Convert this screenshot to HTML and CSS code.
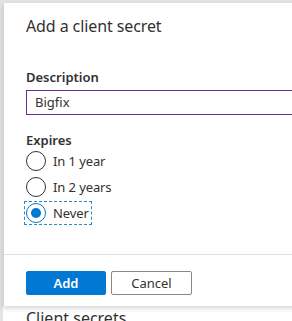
FILE: index.html
```html
<!DOCTYPE html>
<html>
<head>
<meta charset="utf-8">
<link rel="stylesheet" href="styles.css">
</head>
<body>
<div class="page">
  <div class="topstrip"></div>
  <h2 class="section">Client secrets</h2>
</div>
<div class="dialog">
  <div class="body">
    <h1 class="title">Add a client secret</h1>
    <label class="label">Description</label>
    <div class="input">Bigfix</div>
    <div class="label expires">Expires</div>
    <div class="radios">
      <div class="radio"><span class="circle"></span><span>In 1 year</span></div>
      <div class="radio"><span class="circle"></span><span>In 2 years</span></div>
      <div class="radio checked focus"><span class="circle"><span class="dot"></span></span><span>Never</span></div>
    </div>
  </div>
  <div class="footer">
    <button class="btn primary">Add</button>
    <button class="btn">Cancel</button>
  </div>
</div>
</body>
</html>
```
FILE: styles.css
```css
* { box-sizing: border-box; }
html, body { margin: 0; padding: 0; }
body {
  width: 292px; height: 321px; overflow: hidden;
  background: #fff;
  font-family: "Segoe UI", "Noto Sans", "Open Sans", sans-serif;
  color: #323130;
  position: relative;
}
.page { height: 321px; border-left: 3px solid #e4e4e4; }
.topstrip { height: 3px; background: #e4e4e4; }
.section {
  margin: 0; padding: 305px 0 0 23px;
  font-size: 16px; font-weight: 400; line-height: 20px; color: #323130;
}
.dialog {
  position: absolute; left: 3px; top: 3px; width: 320px; height: 303px;
  background: #fff;
  border-left: 1px solid #d6d6d6;
  box-shadow: 0 2px 5px rgba(0,0,0,0.18);
  display: flex; flex-direction: column;
}
.body { padding: 0 0 0 22px; flex: 1; }
.title {
  margin: 0; padding-top: 12px;
  font-size: 16px; font-weight: 400; line-height: 22px; letter-spacing: -0.1px;
}
.label {
  display: block; margin-top: 31px;
  font-size: 13px; font-weight: 600; line-height: 18px;
}
.input {
  margin-top: 4px; height: 25px; border: 1px solid #6c2c8c; border-right: none;
  padding-left: 8px; font-size: 13px; line-height: 22px;
}
.expires { margin-top: 16px; }
.radios { display: flex; flex-direction: column; gap: 6px; margin-top: 2px; }
.radio {
  display: flex; align-items: center; gap: 7px;
  font-size: 13px; line-height: 20px; height: 20px; width: max-content;
  letter-spacing: -0.1px;
}
.circle {
  width: 20px; height: 20px; border-radius: 50%;
  border: 1px solid #323130; display: flex; align-items: center; justify-content: center;
}
.checked .circle { border-color: #0078d4; }
.dot { width: 10px; height: 10px; border-radius: 50%; background: #0078d4; }
.focus { outline: 1px dashed #2a8bc4; outline-offset: 1px; padding-right: 1px; }
.footer {
  border-top: 1px solid #e1dfdd; height: 52px;
  display: flex; align-items: flex-start; gap: 5px;
  padding: 16px 0 0 22px;
}
.btn {
  width: 80px; height: 24px; border-radius: 2px;
  font-family: inherit; font-size: 13px; line-height: 20px;
  border: 1px solid #8a8886; background: #fff; color: #323130; padding: 0;
}
.btn.primary { background: #0078d4; border-color: #0078d4; color: #fff; font-weight: 600; }
.btn + .btn { width: 81px; }
```
